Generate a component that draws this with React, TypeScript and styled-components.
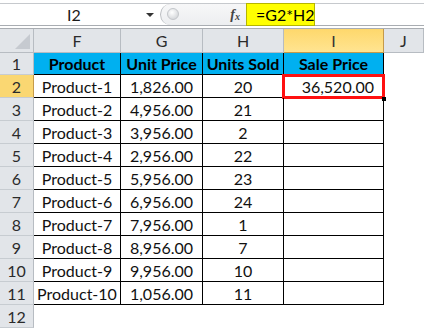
import React from 'react';
import styled, { createGlobalStyle, css } from 'styled-components';

const GlobalStyle = createGlobalStyle`
  html, body {
    margin: 0;
    padding: 0;
    background: #ffffff;
    overflow: hidden;
  }
  body {
    font-family: Lato, "Liberation Sans", sans-serif;
  }
`;

const rows: [string, string, string, string][] = [
  ['Product-1', '1,826.00', '20', '36,520.00'],
  ['Product-2', '4,956.00', '21', ''],
  ['Product-3', '3,956.00', '2', ''],
  ['Product-4', '2,956.00', '22', ''],
  ['Product-5', '5,956.00', '23', ''],
  ['Product-6', '6,956.00', '24', ''],
  ['Product-7', '7,956.00', '1', ''],
  ['Product-8', '8,956.00', '7', ''],
  ['Product-9', '9,956.00', '10', ''],
  ['Product-10', '1,056.00', '11', ''],
];

export default () => {
  return (
    <Window>
      <GlobalStyle />
      <FormulaBar>
        <NameBox>
          <span>I2</span>
          <Caret />
        </NameBox>
        <Splitter>
          <Knob />
          <Fx>
            f<sub>x</sub>
          </Fx>
        </Splitter>
        <FormulaInput>
          <Formula>=G2*H2</Formula>
        </FormulaInput>
      </FormulaBar>
      <Sheet>
        <Corner>
          <CornerMark />
        </Corner>
        {['F', 'G', 'H', 'I', 'J'].map((c) => (
          <ColHead key={c} $active={c === 'I'}>
            {c}
          </ColHead>
        ))}

        <RowHead>1</RowHead>
        <Th>Product</Th>
        <Th>Unit Price</Th>
        <Th>Units Sold</Th>
        <Th>Sale Price</Th>
        <Blank />

        {rows.map((r, i) => (
          <React.Fragment key={r[0]}>
            <RowHead $active={i === 0}>{i + 2}</RowHead>
            <Td>{r[0]}</Td>
            <Td>{r[1]}</Td>
            <Td>{r[2]}</Td>
            <Td $align="right" $selected={i === 0}>
              {r[3]}
            </Td>
            <Blank />
          </React.Fragment>
        ))}

        <RowHead>12</RowHead>
        <Blank />
        <Blank />
        <Blank />
        <Blank />
        <Blank />
      </Sheet>
    </Window>
  );
};

const Window = styled.div`
  width: 424px;
  height: 328px;
  background: #ffffff;
  color: #000;
`;

const FormulaBar = styled.div`
  display: flex;
  height: 21px;
  margin-top: 3px;
  border-top: 1px solid #c6c9cd;
  border-bottom: 1px solid #a9adb2;
  background: #ffffff;
`;

const NameBox = styled.div`
  position: relative;
  width: 158px;
  display: flex;
  align-items: center;
  justify-content: center;
  font-size: 16px;
  color: #1a1a1a;
  padding-right: 16px;
  box-sizing: border-box;

  span {
    margin-left: 6px;
  }
`;

const Caret = styled.div`
  position: absolute;
  right: 4px;
  top: 9px;
  width: 0;
  height: 0;
  border-left: 4px solid transparent;
  border-right: 4px solid transparent;
  border-top: 4px solid #333;
`;

const Splitter = styled.div`
  width: 86px;
  display: flex;
  align-items: center;
  justify-content: space-between;
  margin-left: 2px;
  padding: 0 6px 0 6px;
  box-sizing: border-box;
  border-left: 1px solid #b9bcc0;
  border-radius: 11px 0 0 11px;
  background: linear-gradient(#f7f7f8, #eceef0);
`;

const Knob = styled.div`
  width: 10px;
  height: 10px;
  border-radius: 50%;
  background: radial-gradient(circle at 40% 35%, #ffffff, #c9ccd0);
  border: 1px solid #c3c6ca;
  margin-bottom: 2px;
`;

const Fx = styled.div`
  font-family: "Liberation Serif", serif;
  font-style: italic;
  font-weight: bold;
  font-size: 14px;
  color: #444;
  line-height: 1;

  sub {
    font-size: 10px;
    vertical-align: -1px;
  }
`;

const FormulaInput = styled.div`
  flex: 1;
  display: flex;
  align-items: stretch;
  margin-top: -1px;
  margin-bottom: -1px;
`;

const Formula = styled.div`
  width: 69px;
  box-sizing: border-box;
  background: #ffff00;
  border: 1px solid #b5b500;
  font-size: 16px;
  color: #000;
  display: flex;
  align-items: center;
  padding-left: 9px;
`;

const Sheet = styled.div`
  display: grid;
  grid-template-columns: 34px 87px 82px 81px 100px 1fr;
  grid-template-rows: 24px 22px repeat(11, 23px);
  margin-top: 2px;
  border-top: 1px solid #a9adb2;
  font-size: 16px;
`;

const cellBase = css`
  box-sizing: border-box;
  display: flex;
  align-items: center;
  white-space: nowrap;
  overflow: hidden;
`;

const Corner = styled.div`
  ${cellBase};
  position: relative;
  background: #e2e5e9;
  border-right: 1px solid #b7bcc2;
  border-bottom: 1px solid #b7bcc2;
`;

const CornerMark = styled.div`
  position: absolute;
  right: 3px;
  bottom: 3px;
  width: 0;
  height: 0;
  border-left: 15px solid transparent;
  border-bottom: 15px solid #c6cad0;
`;

const ColHead = styled.div<{ $active?: boolean }>`
  ${cellBase};
  justify-content: center;
  color: #2b2b2b;
  background: #e2e5e9;
  border-right: 1px solid #b7bcc2;
  border-bottom: 1px solid #b7bcc2;

  ${({ $active }) =>
    $active &&
    css`
      background: linear-gradient(#fed86c, #ffe491);
      border-right-color: #c59a4a;
      border-bottom-color: #c59a4a;
      color: #333;
    `}
`;

const RowHead = styled.div<{ $active?: boolean }>`
  ${cellBase};
  justify-content: center;
  color: #2b2b2b;
  background: #e2e5e9;
  border-right: 1px solid #b7bcc2;
  border-bottom: 1px solid #c7ccd1;

  ${({ $active }) =>
    $active &&
    css`
      background: #fad772;
      border-right-color: #c59a4a;
    `}
`;

const Th = styled.div`
  ${cellBase};
  justify-content: center;
  background: #00b0f0;
  font-weight: bold;
  border-right: 1px solid #000;
  border-bottom: 1px solid #000;
`;

const Td = styled.div<{ $align?: 'center' | 'right'; $selected?: boolean }>`
  ${cellBase};
  position: relative;
  overflow: visible;
  justify-content: ${({ $align }) => ($align === 'right' ? 'flex-end' : 'center')};
  padding-right: ${({ $align }) => ($align === 'right' ? '9px' : '0')};
  border-right: 1px solid #000;
  border-bottom: 1px solid #000;
  color: #111;

  ${({ $selected }) =>
    $selected &&
    css`
      &::after {
        content: '';
        position: absolute;
        left: -2px;
        top: -1px;
        right: -2px;
        bottom: -2px;
        border: 3px solid #ff1010;
      }
      &::before {
        content: '';
        position: absolute;
        right: -3px;
        bottom: -4px;
        width: 4px;
        height: 4px;
        background: #000;
        z-index: 2;
      }
    `}
`;

const Blank = styled.div`
  ${cellBase};
  background: #fff;
`;
